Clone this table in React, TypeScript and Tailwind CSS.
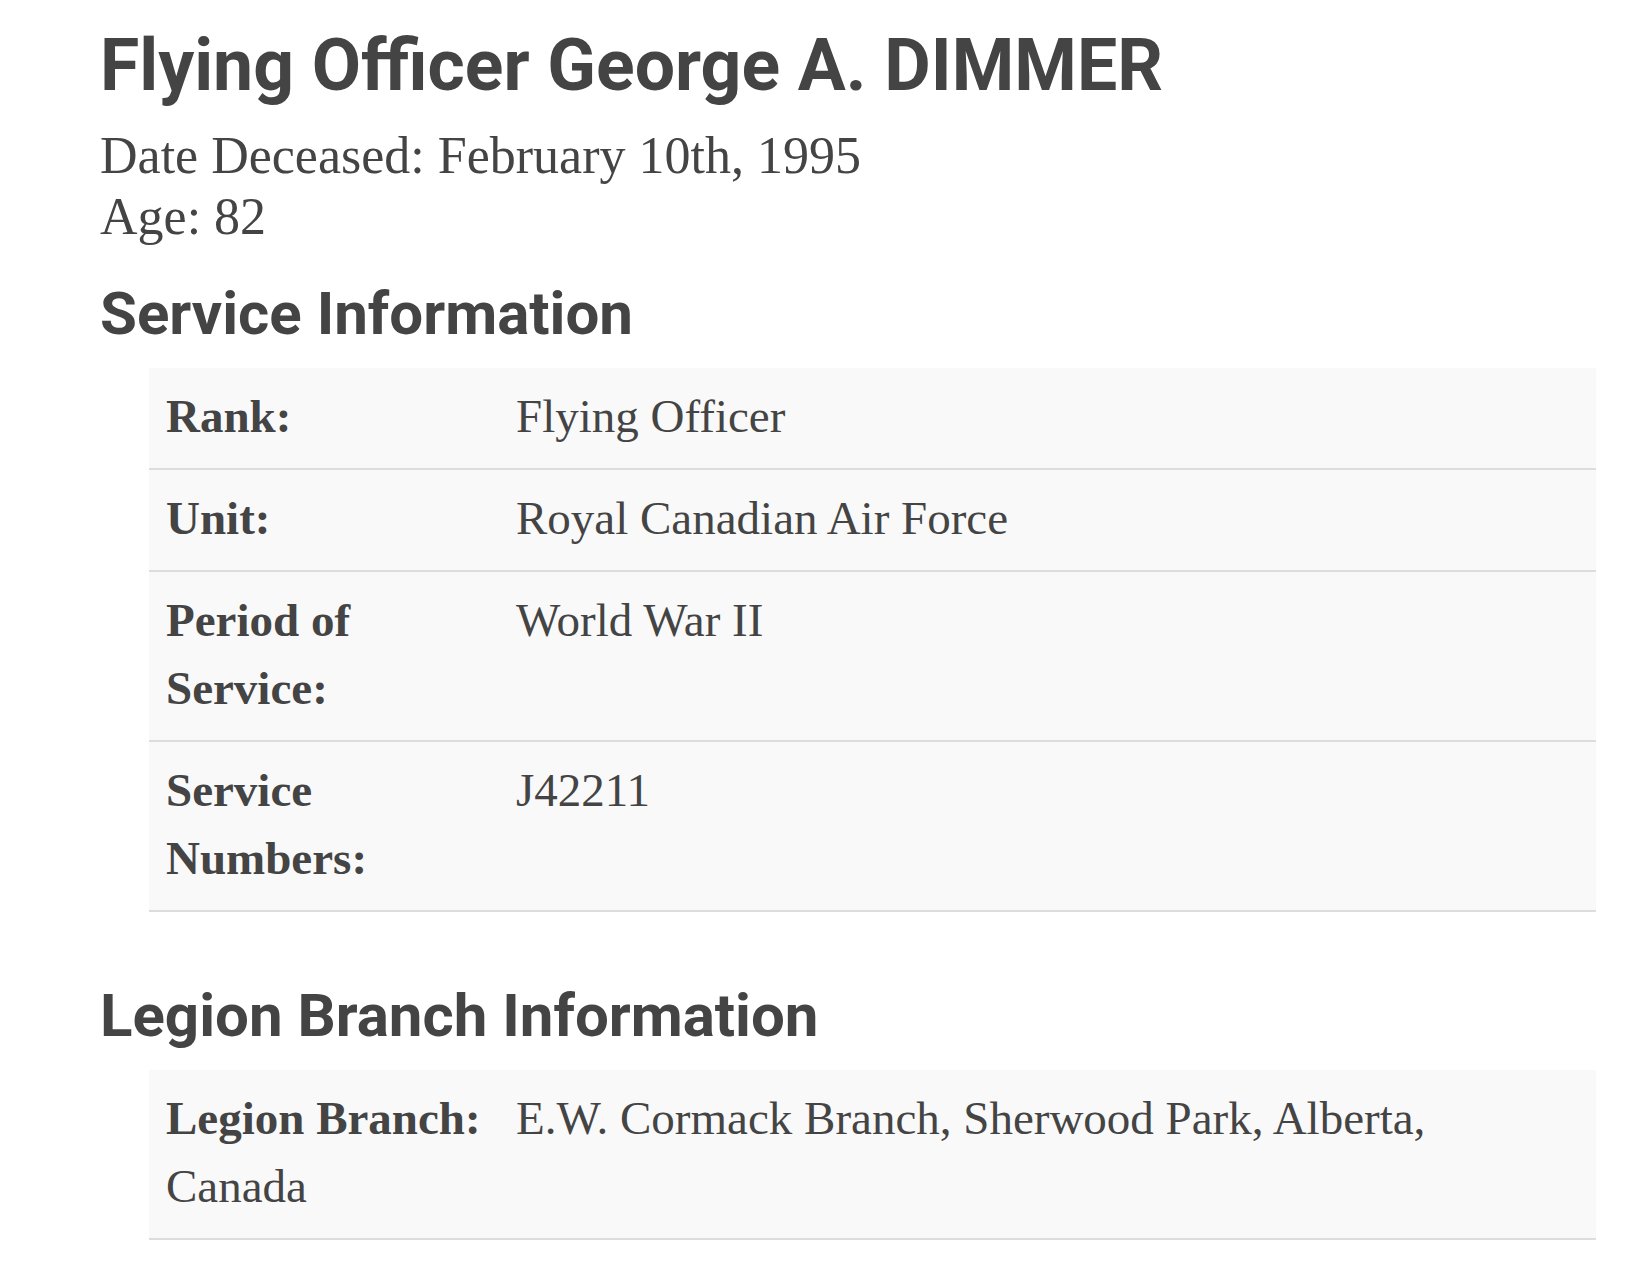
const serif = { fontFamily: '"Liberation Serif", "Times New Roman", serif' };

const service = [
  { label: "Rank:", value: "Flying Officer" },
  { label: "Unit:", value: "Royal Canadian Air Force" },
  { label: "Period of Service:", value: "World War II" },
  { label: "Service Numbers:", value: "J42211" },
];

function Heading({ children, className = "" }: any) {
  return (
    <h2
      className={`font-['Roboto',sans-serif] font-bold text-[60px] leading-[70px] text-[#444] ${className}`}
    >
      {children}
    </h2>
  );
}

export default function App() {
  return (
    <div className="min-h-screen bg-white text-[#444] pl-[100px] pr-[29px] pt-[24px] pb-[47px]">
      {/* Name */}
      <h1 className="font-['Roboto',sans-serif] font-bold text-[71.5px] leading-[84px]">
        Flying Officer George A. DIMMER
      </h1>

      <div className="mt-[17px] text-[52px] leading-[61px]" style={serif}>
        <div>Date Deceased: February 10th, 1995</div>
        <div>Age: 82</div>
      </div>

      {/* Service */}
      <Heading className="mt-[32px]">Service Information</Heading>
      <div className="mt-[19px] ml-[49px] bg-[#f9f9f9] text-[47px] leading-[68px]" style={serif}>
        {service.map((row) => (
          <div key={row.label} className="grid grid-cols-[350px_1fr] border-b-2 border-[#dddddd]">
            <div className="pl-[17px] pr-[17px] pt-[14px] pb-[18px] font-bold">{row.label}</div>
            <div className="pl-[17px] pr-[17px] pt-[14px] pb-[18px]">{row.value}</div>
          </div>
        ))}
      </div>

      {/* Legion */}
      <Heading className="mt-[69px]">Legion Branch Information</Heading>
      <div className="mt-[19px] ml-[49px] bg-[#f9f9f9] border-b-2 border-[#dddddd] pl-[17px] pr-[60px] pt-[14px] pb-[18px] text-[47px] leading-[68px]" style={serif}>
        <span className="inline-block w-[350px] font-bold">Legion Branch:</span>
        E.W. Cormack Branch, Sherwood Park, Alberta, Canada
      </div>
    </div>
  );
}
